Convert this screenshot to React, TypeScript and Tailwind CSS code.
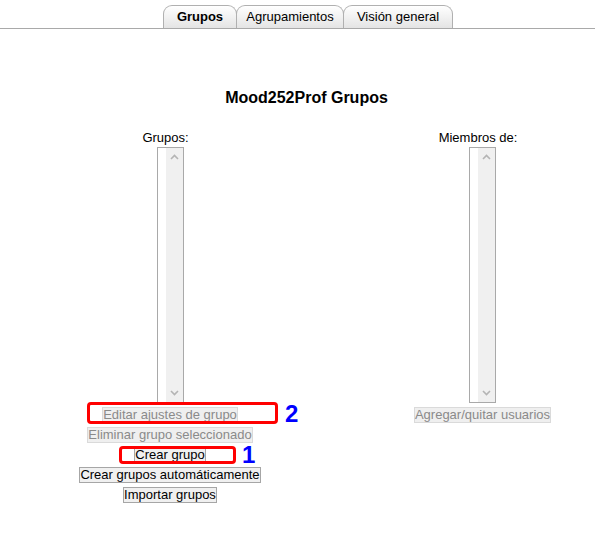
const TABS = [
  { label: "Grupos", active: true },
  { label: "Agrupamientos", active: false },
  { label: "Visión general", active: false },
];

const LEFT_BUTTONS = [
  { label: "Editar ajustes de grupo", disabled: true },
  { label: "Eliminar grupo seleccionado", disabled: true },
  { label: "Crear grupo", disabled: false },
  { label: "Crear grupos automáticamente", disabled: false },
  { label: "Importar grupos", disabled: false },
];

function Chevron({ up }: { up?: boolean }) {
  return (
    <svg width="9" height="6" viewBox="0 0 9 6" className="block">
      <path
        d={up ? "M1 5 L4.5 1.5 L8 5" : "M1 1 L4.5 4.5 L8 1"}
        fill="none"
        stroke="#b4b4b4"
        strokeWidth="1.6"
      />
    </svg>
  );
}

function ListBox() {
  return (
    <div className="flex h-[256px] w-[27px] border border-[#a9a9a9] bg-white">
      <div className="flex-1" />
      <div className="flex w-[17px] flex-col items-center justify-between bg-[#f0f0f0] py-[6px]">
        <Chevron up />
        <Chevron />
      </div>
    </div>
  );
}

function FormButton({ label, disabled }: { label: string; disabled: boolean }) {
  return (
    <button
      className={
        "h-[16px] border px-0 text-[13px] leading-[14px] whitespace-nowrap " +
        (disabled
          ? "border-[#dadada] bg-[#efefef] text-[#8a8a8a]"
          : "border-[#a6a6a6] bg-[#f0f0f0] text-black")
      }
    >
      {label}
    </button>
  );
}

export default function App() {
  return (
    <div className="min-h-[536px] w-[595px] overflow-hidden bg-white text-[13px] text-black [font-family:'Liberation_Sans',Arial,sans-serif]">
      {/* tab strip */}
      <div className="flex h-[29px] items-end border-b border-[#a9a9a9] pl-[163px]">
        {TABS.map((tab, i) => (
          <div
            key={tab.label}
            className={
              "flex h-[23px] items-center rounded-t-[9px] border border-b-0 border-[#b0b0b0] bg-gradient-to-b from-white to-[#e4e4e4] " +
              (i === 0 ? "w-[74px] justify-center font-bold" : i === 1 ? "-ml-px w-[108px] justify-center" : "-ml-px w-[110px] justify-center")
            }
          >
            {tab.label}
          </div>
        ))}
      </div>

      <h2 className="mt-[59px] pl-[18px] text-center text-[16px] leading-[19px] font-bold">Mood252Prof Grupos</h2>

      <div className="mt-[23px] flex">
        {/* groups column */}
        <div className="flex w-[340px] flex-col items-center">
          <div className="pr-[9px] leading-[15px]">Grupos:</div>
          <div className="mt-[2px] flex">
            <ListBox />
          </div>
          <div className="relative mt-[4px] flex w-full flex-col items-center gap-[4px]">
            {LEFT_BUTTONS.map((b) => (
              <FormButton key={b.label} label={b.label} disabled={b.disabled} />
            ))}

            {/* annotations */}
            <div className="absolute top-[-5px] left-[87px] h-[22px] w-[191px] rounded-[4px] border-[3px] border-[#ff0000]" />
            <div className="absolute top-[-5px] left-[285px] text-[24px] leading-[24px] font-bold text-[#0000ff]">2</div>
            <div className="absolute top-[39px] left-[119px] h-[18px] w-[117px] rounded-[4px] border-[3px] border-[#ff0000]" />
            <div className="absolute top-[36px] left-[242px] text-[24px] leading-[24px] font-bold text-[#0000ff]">1</div>
          </div>
        </div>

        {/* members column */}
        <div className="ml-[60px] flex w-[165px] flex-col items-center">
          <div className="pr-[9px] leading-[15px]">Miembros de:</div>
          <div className="mt-[2px] flex">
            <ListBox />
          </div>
          <div className="mt-[4px] flex">
            <FormButton label="Agregar/quitar usuarios" disabled />
          </div>
        </div>
      </div>
    </div>
  );
}
